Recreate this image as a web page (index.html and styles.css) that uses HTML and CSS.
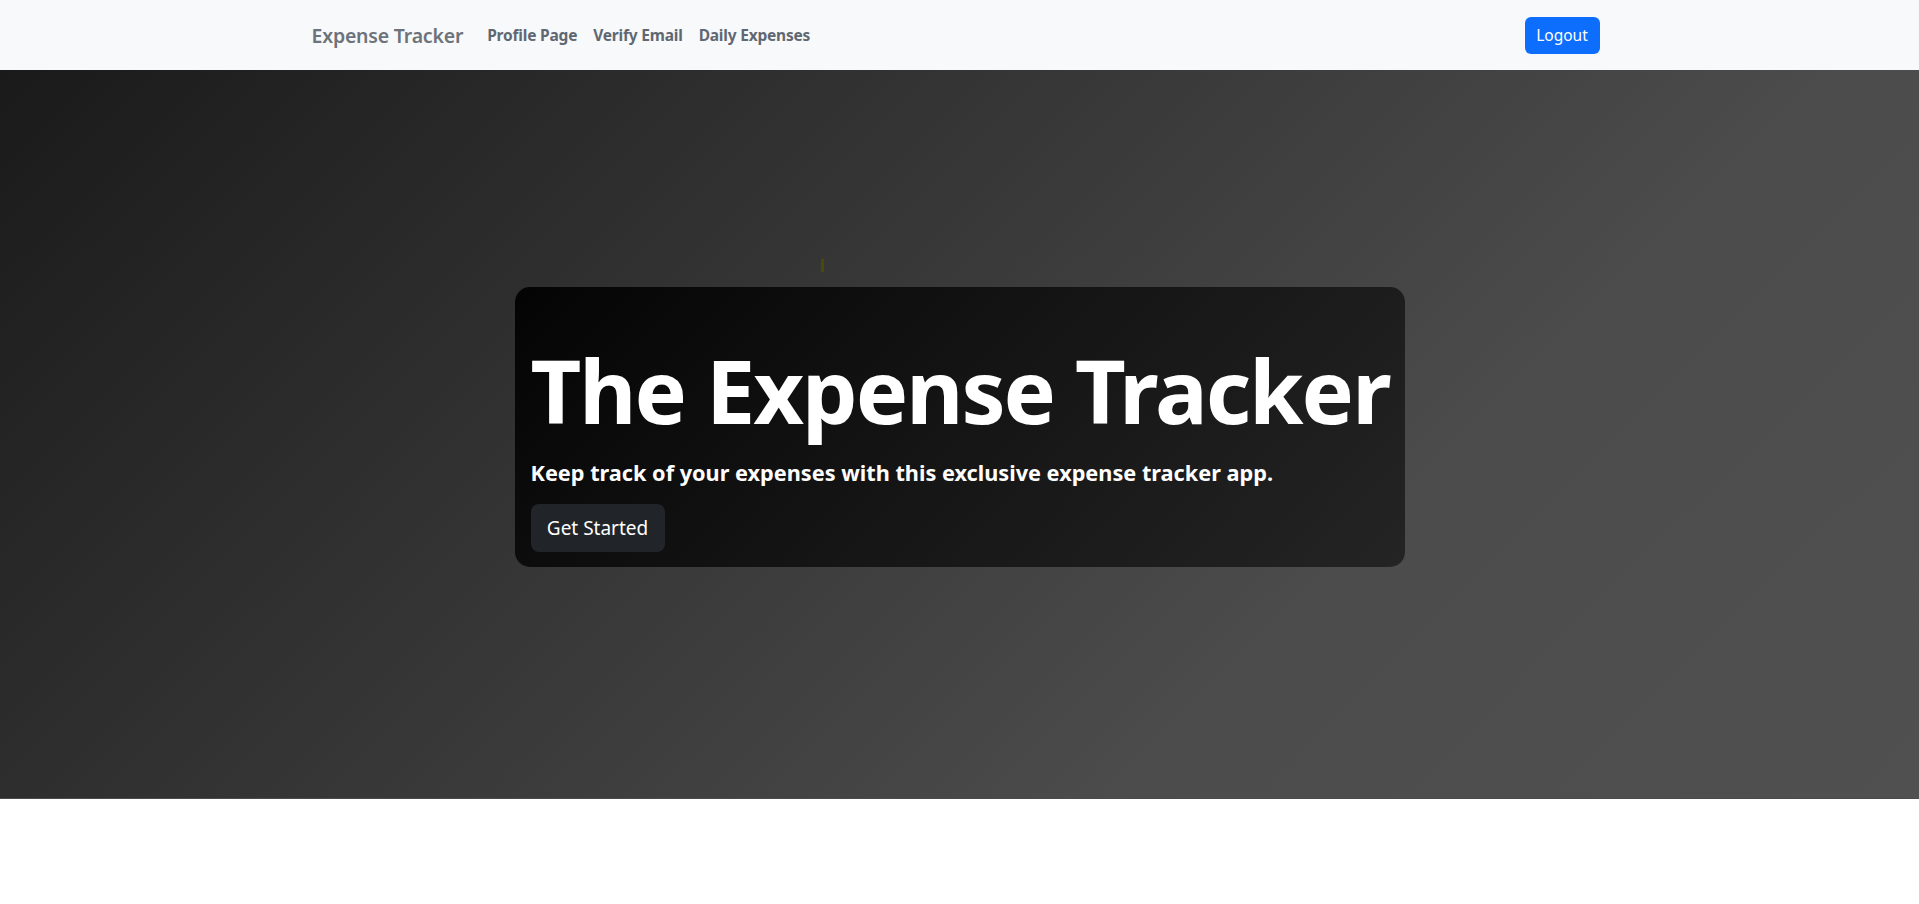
FILE: index.html
```html
<!DOCTYPE html>
<html lang="en">
<head>
<meta charset="utf-8">
<title>Expense Tracker</title>
<link rel="stylesheet" href="styles.css">
</head>
<body>
<nav class="navbar">
  <div class="nav-container">
    <div class="nav-left">
      <a class="brand" href="#">Expense Tracker</a>
      <ul class="nav-links">
        <li><a class="nav-link" href="#">Profile Page</a></li>
        <li><a class="nav-link" href="#">Verify Email</a></li>
        <li><a class="nav-link" href="#">Daily Expenses</a></li>
      </ul>
    </div>
    <button class="btn-logout" type="button">Logout</button>
  </div>
</nav>
<section class="hero">
  <div class="hero-inner">
    <div class="mark-row"><span class="mark"></span></div>
    <div class="hero-card">
      <h1 class="hero-title">The Expense Tracker</h1>
      <h4 class="hero-sub">Keep track of your expenses with this exclusive expense tracker app.</h4>
      <button class="btn-start" type="button">Get Started</button>
    </div>
  </div>
</section>
</body>
</html>
```

FILE: styles.css
```css
* { box-sizing: border-box; }
html, body { margin: 0; padding: 0; }
body {
  font-family: "Noto Sans", "Open Sans", "Liberation Sans", sans-serif;
  background: #fff;
  color: #212529;
}
a { text-decoration: none; }

.navbar {
  background: #f8f9fa;
  height: 70px;
}
.nav-container {
  width: 1320px;
  margin: 0 auto;
  padding: 0 20px 0 12px;
  height: 100%;
  display: flex;
  align-items: center;
  justify-content: space-between;
}
.nav-left {
  display: flex;
  align-items: center;
}
.brand {
  font-size: 19.5px;
  font-weight: 600;
  color: #6c737b;
  margin-right: 16px;
  letter-spacing: -0.2px;
}
.nav-links {
  list-style: none;
  margin: 0;
  padding: 0;
  display: flex;
}
.nav-link {
  display: block;
  padding: 8px 8px;
  font-size: 15.5px;
  font-weight: 700;
  color: #5f6872;
  letter-spacing: -0.2px;
}
.btn-logout {
  background: #0d6efd;
  color: #fff;
  border: none;
  border-radius: 6px;
  width: 75px;
  height: 37px;
  font-family: inherit;
  font-size: 15.5px;
  padding: 0;
}

.hero {
  height: 729px;
  background: linear-gradient(135deg, #1a1a1a 0%, #4c4c4c 70%, #505050 100%);
  border-bottom: 1px solid #4a4a4a;
  padding-top: 189px;
}
.hero-inner {
  width: 890px;
  margin: 0 auto;
}
.mark-row {
  height: 28px;
  padding-left: 306px;
}
.mark {
  display: block;
  width: 3px;
  height: 13px;
  background: #4a4a06;
}
.hero-card {
  background: linear-gradient(135deg, #040404 0%, #151515 50%, #242424 100%);
  border-radius: 15px;
  padding: 16px;
  height: 280px;
}
.hero-title {
  margin: 35px 0 0 0;
  font-size: 88px;
  font-weight: 700;
  line-height: 1.2;
  color: #fff;
  letter-spacing: -2px;
  white-space: nowrap;
}
.hero-sub {
  margin: 16px 0 18px 0;
  font-size: 21.7px;
  font-weight: 700;
  line-height: 1.2;
  color: #fff;
  white-space: nowrap;
}
.btn-start {
  background: #212529;
  color: #fff;
  border: none;
  border-radius: 8px;
  width: 134px;
  height: 48px;
  padding: 0;
  font-family: inherit;
  font-size: 19px;
}
```
